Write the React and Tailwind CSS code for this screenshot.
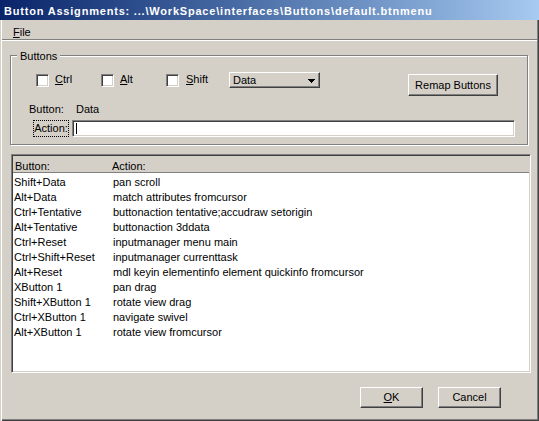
const rows = [
  ["Shift+Data", "pan scroll"],
  ["Alt+Data", "match attributes fromcursor"],
  ["Ctrl+Tentative", "buttonaction tentative;accudraw setorigin"],
  ["Alt+Tentative", "buttonaction 3ddata"],
  ["Ctrl+Reset", "inputmanager menu main"],
  ["Ctrl+Shift+Reset", "inputmanager currenttask"],
  ["Alt+Reset", "mdl keyin elementinfo element quickinfo fromcursor"],
  ["XButton 1", "pan drag"],
  ["Shift+XButton 1", "rotate view drag"],
  ["Ctrl+XButton 1", "navigate swivel"],
  ["Alt+XButton 1", "rotate view fromcursor"],
];

function CheckBox({ mnemonic, rest, className, labelGap }) {
  return (
    <div className={`flex items-start mt-[2px] ${className}`}>
      <div className="w-[13px] h-[13px] shrink-0 bg-white border border-[#808080] border-r-white border-b-white shadow-[inset_1px_1px_0_#404040,inset_-1px_-1px_0_#d4d0c8]" />
      <span className={`mt-[-1px] ${labelGap}`}>
        <u>{mnemonic}</u>
        {rest}
      </span>
    </div>
  );
}

function PushButton({ className, children }) {
  return (
    <div
      className={`flex items-center justify-center border border-white border-r-[#404040] border-b-[#404040] shadow-[inset_-1px_-1px_0_#808080] ${className}`}
    >
      {children}
    </div>
  );
}

export default function App() {
  return (
    <div className="w-[539px] h-[421px] flex flex-col overflow-hidden bg-[#d4d0c8] text-black text-[11px] leading-[13px] font-['Liberation_Sans',Arial,sans-serif]">
      {/* caption */}
      <div className="h-[20px] shrink-0 pt-[5px] pl-[4px] bg-linear-to-r from-[#0a246a] to-[#a6caf0] text-white font-bold tracking-[0.8px] whitespace-nowrap">
        Button Assignments: ...\WorkSpace\interfaces\Buttons\default.btnmenu
      </div>

      <div className="flex-1 flex flex-col shadow-[inset_1px_0_0_#d4d0c8,inset_2px_0_0_#fff,inset_-1px_-1px_0_#404040,inset_-2px_-2px_0_#808080]">
        {/* menu bar */}
        <div className="h-[19px] shrink-0 pt-[6px] pl-[13px]">
          <span>
            <u>F</u>ile
          </span>
        </div>
        <div className="h-[2px] mx-[2px] border-t border-b border-t-[#808080] border-b-white" />

        {/* Buttons group */}
        <div className="relative ml-[10px] mt-[14px] w-[518px] h-[90px] shrink-0 border border-[#808080] shadow-[inset_1px_1px_0_#fff,1px_1px_0_#fff] pt-[16px] flex flex-col">
          <span className="absolute top-[-6px] left-[6px] px-[3px] bg-[#d4d0c8]">Buttons</span>

          <div className="flex items-start pl-[25px]">
            <CheckBox mnemonic="C" rest="trl" className="w-[65px]" labelGap="ml-[6px]" />
            <CheckBox mnemonic="A" rest="lt" className="w-[65px]" labelGap="ml-[6px]" />
            <CheckBox mnemonic="S" rest="hift" className="w-[63px]" labelGap="ml-[7px]" />
            <div className="w-[91px] h-[16px] flex items-center justify-between pl-[3px] pr-[4px] border border-white border-r-[#404040] border-b-[#404040] shadow-[inset_-1px_-1px_0_#808080]">
              <span>Data</span>
              <svg width="7" height="4" viewBox="0 0 7 4" className="mt-[1px]">
                <rect x="0" y="0" width="7" height="1" fill="#000" />
                <rect x="1" y="1" width="5" height="1" fill="#000" />
                <rect x="2" y="2" width="3" height="1" fill="#000" />
                <rect x="3" y="3" width="1" height="1" fill="#000" />
              </svg>
            </div>
            <PushButton className="ml-[88px] mt-[2px] w-[90px] h-[22px]">Remap Buttons</PushButton>
          </div>

          <div className="flex mt-[7px] pl-[18px]">
            <span className="w-[47px]">Button:</span>
            <span>Data</span>
          </div>

          <div className="flex items-center mt-[4px] pl-[22px]">
            <div className="w-[36px] h-[17px] flex items-center justify-center border border-dotted border-black">
              Action:
            </div>
            <div className="ml-[3px] w-[443px] h-[17px] flex items-center bg-white border border-[#808080] border-r-white border-b-white shadow-[inset_1px_1px_0_#404040,inset_-1px_-1px_0_#d4d0c8]">
              <div className="ml-[3px] w-px h-[11px] bg-black" />
            </div>
          </div>
        </div>

        {/* assignment list */}
        <div className="ml-[11px] mt-[9px] w-[520px] h-[219px] shrink-0 flex flex-col bg-white border border-[#808080] border-r-white border-b-white shadow-[inset_1px_1px_0_#404040,inset_-1px_-1px_0_#d4d0c8] p-px">
          <div className="h-[17px] shrink-0 flex items-start pt-[4px] pl-[2px] bg-[#d4d0c8] border-b border-b-[#808080]">
            <span className="w-[97px]">Button:</span>
            <span>Action:</span>
          </div>
          <div className="flex flex-col pt-[2px]">
            {rows.map(([key, action]) => (
              <div key={key} className="h-[15px] leading-[15px] flex pl-px whitespace-nowrap">
                <span className="w-[99px] shrink-0">{key}</span>
                <span>{action}</span>
              </div>
            ))}
          </div>
        </div>

        {/* dialog buttons */}
        <div className="flex justify-end gap-[15px] mt-[14px] pr-[38px]">
          <PushButton className="w-[63px] h-[21px]">
            <span>
              <u>O</u>K
            </span>
          </PushButton>
          <PushButton className="w-[63px] h-[21px]">Cancel</PushButton>
        </div>
      </div>
    </div>
  );
}
